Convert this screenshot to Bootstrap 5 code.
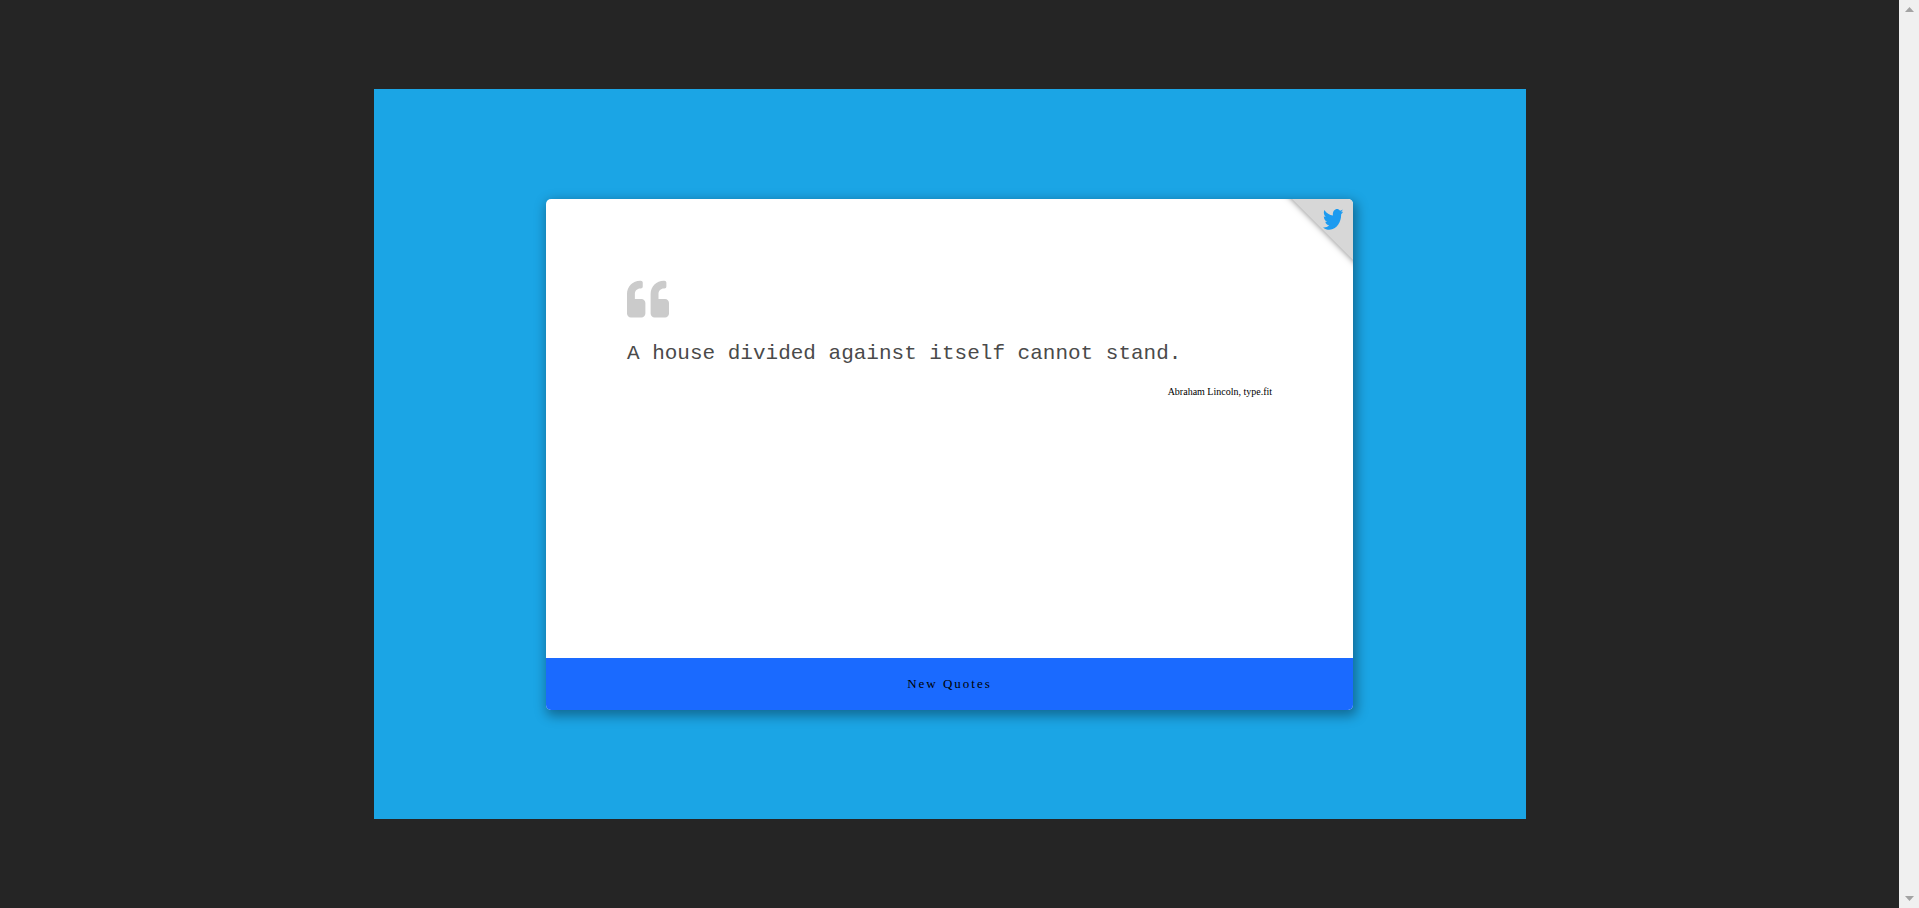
<!DOCTYPE html>
<html lang="en">
<head>
<meta charset="utf-8">
<meta name="viewport" content="width=device-width, initial-scale=1">
<title>Random Quotes</title>
<link href="https://cdn.jsdelivr.net/npm/bootstrap@5.3.0/dist/css/bootstrap.min.css" rel="stylesheet">
<style>
  body { background: #252525; font-family: "Liberation Serif", "Times New Roman", serif; color: #000; }
  .stage { width: 80%; max-width: 1152px; height: 730px; background: #1ba5e5; }
  .quote-card { width: 70%; height: 70%; border: 0; border-radius: 5px; box-shadow: 2px 4px 12px 2px rgba(0, 0, 0, .35); overflow: hidden; }
  .quote-body { padding: 10% 10% 0; }
  .quote-mark { width: 42px; height: 42px; fill: #cbcbcb; margin-top: -1px; }
  .quote-text { font: 21px/32px "Liberation Mono", "Courier New", monospace; color: #4a4a4a; margin: 18px 0 14px; }
  .quote-author { font-size: 10px; line-height: 16px; }
  .corner-link { width: 72px; height: 72px; }
  .corner-fold { fill: #d7d7d7; filter: drop-shadow(0 0 3px rgba(0, 0, 0, .5)); }
  .new-quote { height: 52px; background: #1a6aff; font-size: 13px; letter-spacing: 2px; }
  .page-scroll { width: 20px; background: #f0f0f0; }
  .page-scroll svg { width: 20px; height: 17px; fill: #a3a3a3; }
</style>
</head>
<body>
<div class="d-flex min-vh-100">
  <main class="flex-grow-1 d-flex align-items-center justify-content-center">
    <section class="stage d-flex align-items-center justify-content-center">
      <article class="card quote-card">
        <div class="quote-body flex-grow-1">
          <svg class="quote-mark d-block" viewBox="0 0 512 512" aria-hidden="true"><path d="M464 256h-80v-64c0-35.300 28.700-64 64-64h8c13.300 0 24-10.700 24-24V56c0-13.300-10.700-24-24-24h-8c-88.400 0-160 71.600-160 160v240c0 26.500 21.500 48 48 48h128c26.500 0 48-21.500 48-48V304c0-26.500-21.500-48-48-48zm-288 0H96v-64c0-35.300 28.700-64 64-64h8c13.300 0 24-10.700 24-24V56c0-13.300-10.700-24-24-24h-8C71.600 32 0 103.600 0 192v240c0 26.500 21.500 48 48 48h128c26.500 0 48-21.500 48-48V304c0-26.500-21.500-48-48-48z"/></svg>
          <p class="quote-text">A house divided against itself cannot stand.</p>
          <p class="quote-author text-end mb-0">Abraham Lincoln, type.fit</p>
        </div>
        <a class="corner-link position-absolute top-0 end-0" href="#" aria-label="Tweet this quote">
          <svg class="d-block" width="72" height="72" viewBox="0 0 72 72">
            <path class="corner-fold" d="M1 -10H90V79Z"/>
            <path fill="#1d9bf0" transform="translate(42 7.600) scale(.0395 .050)" d="M459.370 151.716c.325 4.548.325 9.097.325 13.645 0 138.720-105.583 298.558-298.558 298.558-59.452 0-114.680-17.219-161.137-47.106 8.447.974 16.568 1.299 25.340 1.299 49.055 0 94.213-16.568 130.274-44.832-46.132-.975-84.792-31.188-98.112-72.772 6.498.974 12.995 1.624 19.818 1.624 9.421 0 18.843-1.300 27.614-3.573-48.081-9.747-84.143-51.980-84.143-102.985v-1.299c13.969 7.797 30.214 12.670 47.431 13.319-28.264-18.843-46.781-51.005-46.781-87.391 0-19.492 5.197-37.360 14.294-52.954 51.655 63.675 129.300 105.258 216.365 109.807-1.624-7.797-2.599-15.918-2.599-24.040 0-57.828 46.782-104.934 104.934-104.934 30.213 0 57.502 12.670 76.670 33.137 23.715-4.548 46.456-13.320 66.599-25.340-7.798 24.366-24.366 44.833-46.132 57.827 21.117-2.273 41.584-8.122 60.426-16.243-14.292 20.791-32.161 39.308-52.628 54.253z"/>
          </svg>
        </a>
        <button class="new-quote border-0 w-100 text-black" type="button">New Quotes</button>
      </article>
    </section>
  </main>
  <div class="page-scroll d-flex flex-column justify-content-between" aria-hidden="true">
    <svg viewBox="0 0 20 17"><path d="M6 12L10.500 7L15 12Z"/></svg>
    <svg viewBox="0 0 20 17"><path d="M6 5H15L10.500 10Z"/></svg>
  </div>
</div>
<script src="https://cdn.jsdelivr.net/npm/bootstrap@5.3.0/dist/js/bootstrap.bundle.min.js"></script>
</body>
</html>
